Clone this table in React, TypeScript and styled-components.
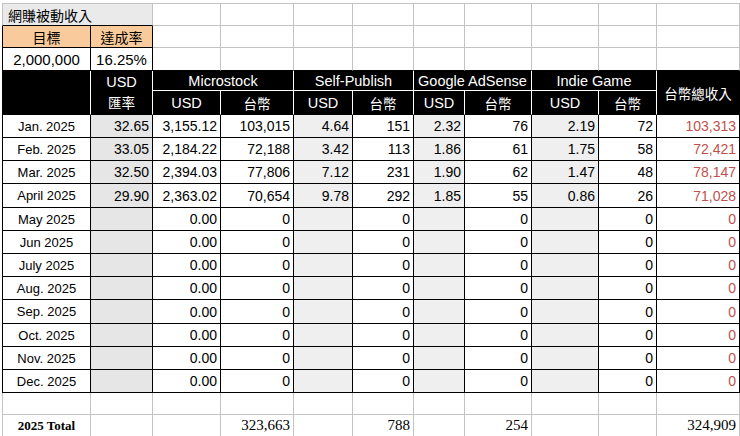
import React from "react";
import styled, { createGlobalStyle, css } from "styled-components";

const GRID = "#c3c3c3";
const INK = "#000";
const RED = "#c0504d";

const GlobalStyle = createGlobalStyle`
  html, body {
    margin: 0;
    padding: 0;
    background: #fff;
    overflow: hidden;
  }
  body {
    font-family: "Liberation Sans", Arial, "Noto Sans CJK TC", sans-serif;
    color: #000;
  }
`;

const MONTHS = [
  "Jan. 2025",
  "Feb. 2025",
  "Mar. 2025",
  "April 2025",
  "May 2025",
  "Jun 2025",
  "July 2025",
  "Aug. 2025",
  "Sep. 2025",
  "Oct. 2025",
  "Nov. 2025",
  "Dec. 2025",
];

// rate, micro usd, micro twd, self usd, self twd, ads usd, ads twd, indie usd, indie twd, total
const FILLED = [
  ["32.65", "3,155.12", "103,015", "4.64", "151", "2.32", "76", "2.19", "72", "103,313"],
  ["33.05", "2,184.22", "72,188", "3.42", "113", "1.86", "61", "1.75", "58", "72,421"],
  ["32.50", "2,394.03", "77,806", "7.12", "231", "1.90", "62", "1.47", "48", "78,147"],
  ["29.90", "2,363.02", "70,654", "9.78", "292", "1.85", "55", "0.86", "26", "71,028"],
];
const EMPTY = ["", "0.00", "0", "", "0", "", "0", "", "0", "0"];

const GROUPS = ["Microstock", "Self-Publish", "Google AdSense", "Indie Game"];

const TOTALS = ["", "", "323,663", "", "788", "", "254", "", "", "324,909"];

// which data columns carry a grey fill
const SHADE: Array<"rate" | "usd" | undefined> = [
  "rate",
  undefined,
  undefined,
  "usd",
  undefined,
  "usd",
  undefined,
  "usd",
  undefined,
  undefined,
];

const Sheet = styled.div`
  display: grid;
  grid-template-columns: 89px 62px 68px 73px 59px 61px 51px 67px 67px 58px 83px;
  grid-template-rows:
    23px 22px 23px 20px 24px
    23px 23px 23px 24px 23px 23px 23px 23px 24px 23px 23px 23px
    22px 22px;
  margin: 3px 0 0 2px;
`;

const Cell = styled.div<{ $first?: boolean; $top?: boolean; $edge?: boolean }>`
  box-sizing: border-box;
  display: flex;
  align-items: center;
  padding: 0 3px;
  white-space: nowrap;
  overflow: hidden;
  font-size: 14px;
  border-right: 1px solid ${GRID};
  border-bottom: 1px solid ${(p) => (p.$edge ? INK : GRID)};
  ${(p) => p.$first && css`border-left: 1px solid ${GRID};`}
  ${(p) => p.$top && css`border-top: 1px solid ${GRID};`}
`;

const TitleCell = styled(Cell)`
  grid-column: span 2;
  background: #eaeaea;
  border-bottom-color: ${INK};
  padding-left: 5px;
`;

const TargetHead = styled(Cell)`
  justify-content: center;
  background: #f9cb9c;
  border-right-color: ${INK};
  border-bottom-color: ${INK};
  ${(p) => p.$first && css`border-left-color: ${INK};`}
`;

const TargetValue = styled(TargetHead)`
  background: #fff;
  font-size: 15px;
`;

const HeadCell = styled(Cell)<{ $span?: "row" | "col"; $under?: "white" | "black"; $last?: boolean }>`
  justify-content: center;
  background: #000;
  color: #fff;
  font-size: 14.5px;
  border-right-color: ${(p) => (p.$last ? INK : "#fff")};
  border-bottom-color: ${(p) => (p.$under === "white" ? "#fff" : INK)};
  ${(p) => p.$first && css`border-left-color: ${INK};`}
  ${(p) => p.$span === "row" && css`grid-row: span 2;`}
  ${(p) => p.$span === "col" && css`grid-column: span 2;`}
`;

const Stack = styled.div`
  display: flex;
  flex-direction: column;
  align-items: center;
  line-height: 21px;
`;

const Han = styled.span`
  font-size: 13.5px;
`;

const MonthCell = styled(Cell)`
  justify-content: center;
  font-size: 13px;
  border-left: 1px solid ${INK};
  border-right-color: ${INK};
  border-bottom-color: ${INK};
`;

const NumCell = styled(Cell)<{ $shade?: "rate" | "usd"; $red?: boolean }>`
  justify-content: flex-end;
  border-right-color: ${INK};
  border-bottom-color: ${INK};
  background: ${(p) => (p.$shade === "rate" ? "#e6e6e6" : p.$shade === "usd" ? "#efefef" : "#fff")};
  color: ${(p) => (p.$red ? RED : "#000")};
`;

const FootCell = styled(Cell)<{ $label?: boolean }>`
  justify-content: ${(p) => (p.$label ? "center" : "flex-end")};
  font-family: "Liberation Serif", "Times New Roman", serif;
  font-size: ${(p) => (p.$label ? "13px" : "15px")};
  font-weight: ${(p) => (p.$label ? 700 : 400)};
`;

export default function App() {
  const blanks = (count: number, top: boolean, edge: boolean) =>
    Array.from({ length: count }, (_, i) => <Cell key={i} $top={top} $edge={edge} />);

  return (
    <>
      <GlobalStyle />
      <Sheet>
        {/* top block */}
        <TitleCell $first $top>
          網賺被動收入
        </TitleCell>
        {blanks(9, true, false)}

        <TargetHead $first>目標</TargetHead>
        <TargetHead>達成率</TargetHead>
        {blanks(9, false, false)}

        <TargetValue $first>2,000,000</TargetValue>
        <TargetValue>16.25%</TargetValue>
        {blanks(9, false, true)}

        {/* header */}
        <HeadCell $first $span="row" />
        <HeadCell $span="row">
          <Stack>
            <span>USD</span>
            <Han>匯率</Han>
          </Stack>
        </HeadCell>
        {GROUPS.map((g) => (
          <HeadCell key={g} $span="col" $under="white">
            {g}
          </HeadCell>
        ))}
        <HeadCell $span="row" $last>
          <Han>台幣總收入</Han>
        </HeadCell>
        {GROUPS.map((g) => (
          <React.Fragment key={g}>
            <HeadCell>USD</HeadCell>
            <HeadCell>
              <Han>台幣</Han>
            </HeadCell>
          </React.Fragment>
        ))}

        {/* months */}
        {MONTHS.map((m, r) => {
          const vals = FILLED[r] ?? EMPTY;
          return (
            <React.Fragment key={m}>
              <MonthCell>{m}</MonthCell>
              {vals.map((v, c) => (
                <NumCell key={c} $shade={SHADE[c]} $red={c === vals.length - 1}>
                  {v}
                </NumCell>
              ))}
            </React.Fragment>
          );
        })}

        {/* spacer row */}
        <Cell $first />
        {blanks(10, false, false)}

        {/* totals */}
        <FootCell $first $label>
          2025 Total
        </FootCell>
        {TOTALS.map((t, i) => (
          <FootCell key={i}>{t}</FootCell>
        ))}
      </Sheet>
    </>
  );
}
